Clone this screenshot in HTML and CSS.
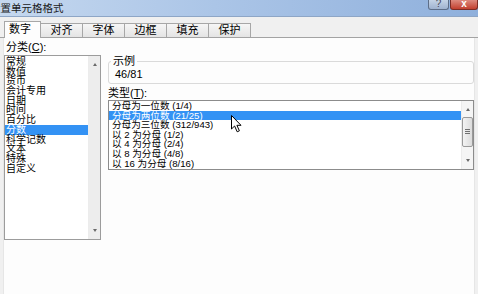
FILE: index.html
```html
<!DOCTYPE html>
<html lang="zh-CN">
<head>
    <meta charset="UTF-8">
    <title>设置单元格格式</title>
    <link rel="stylesheet" href="styles.css">
</head>
<body>
    <div class="dialog">
        <div class="titlebar">
            <span class="title">设置单元格格式</span>
            <div class="caption-btns">
                <span class="btn-help">?</span>
                <span class="btn-close">x</span>
            </div>
        </div>

        <div class="tabs">
            <span class="tab active">数字</span>
            <span class="tab">对齐</span>
            <span class="tab">字体</span>
            <span class="tab">边框</span>
            <span class="tab">填充</span>
            <span class="tab">保护</span>
        </div>

        <div class="page">
            <div class="col-left">
                <div class="label">分类(<u>C</u>):</div>
                <div class="listbox category">
                    <ul class="items">
                        <li>常规</li>
                        <li>数值</li>
                        <li>货币</li>
                        <li>会计专用</li>
                        <li>日期</li>
                        <li>时间</li>
                        <li>百分比</li>
                        <li class="selected">分数</li>
                        <li>科学记数</li>
                        <li>文本</li>
                        <li>特殊</li>
                        <li>自定义</li>
                    </ul>
                    <div class="vscroll flat">
                        <span class="arrow up"></span>
                        <span class="arrow down"></span>
                    </div>
                </div>
            </div>

            <div class="col-right">
                <fieldset class="sample">
                    <legend>示例</legend>
                    <div class="sample-value">46/81</div>
                </fieldset>

                <div class="label type-label">类型(<u>T</u>):</div>
                <div class="listbox types">
                    <ul class="items">
                        <li>分母为一位数 (1/4)</li>
                        <li class="selected">分母为两位数 (21/25)</li>
                        <li>分母为三位数 (312/943)</li>
                        <li>以 2 为分母 (1/2)</li>
                        <li>以 4 为分母 (2/4)</li>
                        <li>以 8 为分母 (4/8)</li>
                        <li>以 16 为分母 (8/16)</li>
                    </ul>
                    <div class="vscroll">
                        <span class="arrow up"></span>
                        <span class="thumb"><i></i><i></i><i></i></span>
                        <span class="arrow down"></span>
                    </div>
                </div>
            </div>
        </div>

        <!-- mouse pointer over the type list -->
        <svg class="cursor" width="12" height="18" viewBox="0 0 12 18">
            <path d="M0.5 0.5 L0.5 14 L3.6 11 L6.2 16.8 L8.4 15.8 L5.9 10.3 L10 10.3 Z" fill="#fff" stroke="#000" stroke-width="1"/>
        </svg>
    </div>
</body>
</html>
```

FILE: styles.css
```css
* {
    box-sizing: border-box;
}
body {
    margin: 0;
    width: 478px;
    height: 294px;
    overflow: hidden;
    font-family: "Liberation Sans", "Noto Sans CJK SC", sans-serif;
    font-size: 11px;
    color: #000;
    background: #fff;
}
.dialog {
    position: relative;
    height: 294px;
    display: flex;
    flex-direction: column;
    background: #f0f0f0;
}
.titlebar {
    height: 17px;
    display: flex;
    justify-content: space-between;
    background: linear-gradient(to right, #c5d8ef, #abc5e7 45%, #8fb0dc);
    border-bottom: 1px solid #8ea6c6;
}
.title {
    margin-left: -10px;
    line-height: 16px;
    font-size: 10.5px;
    color: #1a1a1a;
}
.caption-btns {
    display: flex;
    gap: 1px;
    align-self: flex-start;
}
.btn-help,
.btn-close {
    height: 10px;
    font-size: 10px;
    line-height: 8px;
    text-align: center;
    border: 1px solid #5d6e88;
    border-top: none;
    border-radius: 0 0 3px 3px;
}
.btn-help {
    width: 21px;
    color: #445;
    background: linear-gradient(#c4d3e6, #9fb3cf);
}
.btn-close {
    width: 28px;
    color: #fff;
    font-weight: bold;
    border-color: #7c2c24;
    background: linear-gradient(#dd8a7e, #c2402f);
}
.tabs {
    height: 21px;
    display: flex;
    align-items: flex-end;
    padding-left: 4px;
    border-bottom: 1px solid #a3a3a3;
}
.tab {
    width: 42px;
    height: 14px;
    line-height: 12px;
    text-align: center;
    border: 1px solid #a7a7a7;
    border-left: none;
    border-bottom: none;
    background: linear-gradient(#f6f6f6, #e4e4e4);
}
.tab.active {
    width: 37px;
    height: 17px;
    margin-bottom: -1px;
    line-height: 14px;
    text-align: left;
    padding-left: 4px;
    border-left: 1px solid #a7a7a7;
    background: #fdfdfd;
}
.page {
    flex: 1;
    margin: 0 3px;
    padding-top: 4px;
    background: #fdfdfd;
    border-left: 1px solid #e6e6e6;
    border-right: 1px solid #e6e6e6;
    display: grid;
    grid-template-columns: 97px 366px;
    column-gap: 7px;
    align-items: start;
}
.label {
    line-height: 10px;
    white-space: nowrap;
}
.col-left .label {
    margin-left: 2px;
    margin-bottom: 3px;
}
.listbox {
    display: flex;
    border: 1px solid #9c9c9c;
    background: #fff;
}
.listbox.category {
    height: 185px;
}
.listbox.types {
    height: 70px;
    border-color: #8c8c8c;
}
.items {
    flex: 1;
    margin: 0;
    padding: 1px 0 0;
    list-style: none;
    font-size: 10px;
}
.category .items li {
    height: 9.7px;
    line-height: 9.7px;
    padding-left: 1px;
    white-space: nowrap;
}
.types .items {
    padding-top: 0;
    font-size: 9.6px;
}
.types .items li {
    height: 9.6px;
    line-height: 9.6px;
    padding-left: 3px;
    white-space: pre;
}
.items li.selected {
    background: #3392f4;
    color: #fff;
}
.vscroll {
    width: 12px;
    display: flex;
    flex-direction: column;
    justify-content: space-between;
    align-items: center;
    padding: 7px 0;
    background: #f5f5f5;
    border-left: 1px solid #ececec;
}
.vscroll.flat {
    background: #ededed;
}
.arrow {
    width: 0;
    height: 0;
    border-left: 2.5px solid transparent;
    border-right: 2.5px solid transparent;
}
.arrow.up {
    border-bottom: 3px solid #6a6a6a;
}
.arrow.down {
    border-top: 3px solid #6a6a6a;
}
.thumb {
    width: 11px;
    height: 30px;
    margin: -3px 0 4px;
    border: 1px solid #9a9a9a;
    border-radius: 2px;
    background: linear-gradient(to right, #f3f3f3, #dcdcdc);
    display: flex;
    flex-direction: column;
    justify-content: center;
    align-items: center;
    gap: 1px;
}
.thumb i {
    width: 5px;
    height: 1px;
    background: #707070;
}
.sample {
    margin: 14px 0 0;
    padding: 1px 2px 2px;
    height: 28px;
    border: 1px solid #dadada;
    border-radius: 3px;
}
.sample legend {
    padding: 0 2px;
    line-height: 11px;
}
.sample-value {
    padding-left: 4px;
    line-height: 12px;
}
.type-label {
    margin-top: 4px;
    margin-bottom: 2px;
}
.cursor {
    position: absolute;
    left: 231px;
    top: 115px;
}
```
